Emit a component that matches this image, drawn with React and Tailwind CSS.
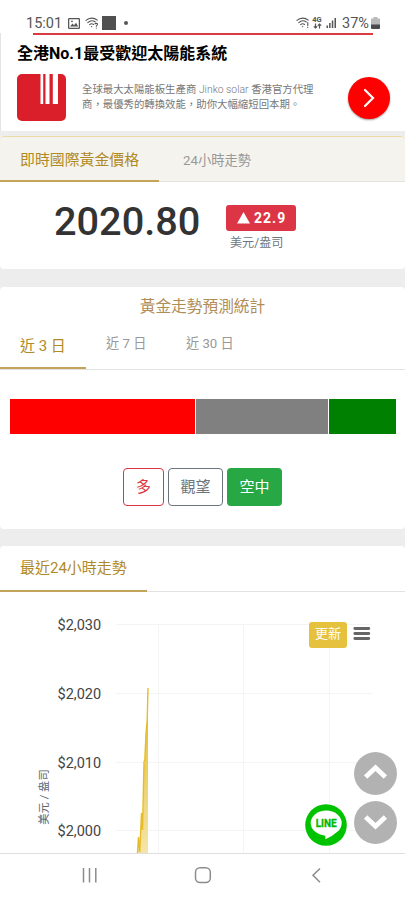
const segments = [
  { name: 'up', className: 'w-[185px] bg-[#ff0000]' },
  { name: 'wait', className: 'w-[132px] bg-[#808080]' },
  { name: 'down', className: 'w-[67px] bg-[#008000]' },
]

const yTicks = [
  { label: '$2,030', y: 33 },
  { label: '$2,020', y: 102 },
  { label: '$2,010', y: 171 },
  { label: '$2,000', y: 239 },
]

const xTicks = [158, 243, 329]

function WifiIcon({ mark }) {
  return (
    <svg width="14" height="12" viewBox="0 0 14 12" fill="none" stroke="#555" strokeWidth="1.1" strokeLinecap="round">
      <path d="M1 3.4C4.2.4 9 .4 12.2 3.2" />
      <path d="M2.8 5.6C5.2 3.4 8.2 3.4 10.3 5" />
      <path d="M4.6 7.7C6 6.5 7.4 6.6 8.5 7.5" />
      <circle cx="6.6" cy="9.6" r="0.7" fill="#555" stroke="none" />
      {mark === 'bar' ? (
        <path d="M11.8 5.5V8.6M11.8 10.4V10.5" />
      ) : (
        <path d="M9.9 6.9C10.6 6 12.7 6.2 12.5 7.5C12.3 8.4 11.3 8.4 11.3 9.3M11.3 11V11.1" />
      )}
    </svg>
  )
}

function StatusBar() {
  return (
    <div className="flex h-[33px] items-start justify-between bg-white pl-[26px] pr-[25px] pt-[14px] text-[#555]">
      <div className="flex h-[20px] items-center">
        <span className="w-[42px] text-[14.5px] leading-5">15:01</span>
        <svg width="12" height="11" viewBox="0 0 12 11" className="-mt-0.5">
          <rect x="0.6" y="0.6" width="10.8" height="9.8" rx="1" fill="none" stroke="#555" strokeWidth="1.3" />
          <path d="M2 8.6L4.5 5.6L6 7.2L8 4.8L10.2 8.6Z" fill="#555" />
          <circle cx="4" cy="3.3" r="0.9" fill="#555" />
        </svg>
        <span className="-mt-0.5 ml-[5px]"><WifiIcon /></span>
        <span className="-mt-0.5 ml-[3px] h-[14px] w-[14px] bg-[#505050]" />
        <span className="-mt-0.5 ml-[8px] h-[4px] w-[4px] rounded-full bg-[#555]" />
      </div>
      <div className="flex h-[20px] items-center">
        <span className="-mt-0.5"><WifiIcon mark="bar" /></span>
        <div className="-mt-0.5 ml-[2px] flex w-[10px] flex-col items-center">
          <span className="text-[7.5px] font-bold leading-[6px]">4G</span>
          <svg width="9" height="6" viewBox="0 0 9 6" fill="none" stroke="#555" strokeWidth="1.2">
            <path d="M2.5 0.5V5M0.8 3.3L2.5 5L4.2 3.3M6.5 5.5V1M4.8 2.7L6.5 1L8.2 2.7" />
          </svg>
        </div>
        <svg width="11" height="12" viewBox="0 0 11 12" fill="#555" className="-mt-0.5 ml-[4px]">
          <rect x="0.5" y="8.5" width="1.5" height="2.5" />
          <rect x="3.1" y="6" width="1.5" height="5" />
          <rect x="5.8" y="3.5" width="1.5" height="7.5" />
          <rect x="8.5" y="1" width="1.5" height="10" />
        </svg>
        <span className="ml-[5px] w-[29px] whitespace-nowrap text-[14.5px] leading-5">37%</span>
        <svg width="9" height="12" viewBox="0 0 9 12" className="-mt-0.5">
          <path d="M2.5 0H6.5V1.5H9V8H0V1.5H2.5Z" fill="#b9b9b9" />
          <path d="M0 7.5H9V11A1 1 0 0 1 8 12H1A1 1 0 0 1 0 11Z" fill="#4a4a4a" />
        </svg>
      </div>
    </div>
  )
}

function AdBanner() {
  return (
    <div className="h-[98px] border-l border-[#e4e4e4] bg-white">
      <div className="ml-[32px] h-[2px] w-[340px] bg-[#d93c3f]" />
      <p className="ml-[16px] mt-[7px] whitespace-nowrap text-[16px] font-bold leading-[24px] text-black">全港No.1最受歡迎太陽能系統</p>
      <div className="ml-[16px] mt-[8px] flex items-start">
        <svg width="49" height="47" viewBox="0 0 49 47">
          <rect width="49" height="47" rx="5" fill="#da1f2a" />
          <path d="M23.5 0H26.2V30H23.5ZM28.5 0H32.5V30H28.5ZM35.8 0H41V30H35.8Z" fill="#fff" />
        </svg>
        <p className="ml-[16px] mt-[8px] w-[266px] whitespace-nowrap text-[10.4px] leading-[15px] text-[#777]">
          全球最大太陽能板生產商 <span className="font-light">Jinko solar</span> 香港官方代理
          <br />
          商，最優秀的轉換效能，助你大幅縮短回本期。
        </p>
        <div className="mt-[3px] flex h-[42px] w-[42px] items-center justify-center rounded-full bg-[#ff0000] shadow-[0_1px_2px_rgba(0,0,0,0.4)]">
          <svg width="12" height="20" viewBox="0 0 12 20" fill="none" stroke="#fff" strokeWidth="2.2" strokeLinecap="round">
            <path d="M2 2L10 10L2 18" />
          </svg>
        </div>
      </div>
    </div>
  )
}

function PriceCard() {
  return (
    <section className="mt-[5px] h-[133px] overflow-hidden rounded-[4px] bg-white">
      <div className="flex h-[46px] rounded-t-[4px] border-b border-t border-b-[#e6e3da] border-t-[#eadba8] bg-[#f4f3ee]">
        <div className="flex h-[45px] w-[159px] items-center border-b-2 border-[#c4a35a] pl-[20px] text-[14.9px] text-[#b08a24]">
          <span className="mt-[3px]">即時國際黃金價格</span>
        </div>
        <div className="flex h-[46px] items-center pl-[24px] pt-[2px] text-[13.3px] text-[#999]">24小時走勢</div>
      </div>
      <div className="flex pl-[54px] pt-[20px]">
        <span className="w-[172px] text-[39.7px] font-medium leading-[40px] text-[#333]">2020.80</span>
        <div className="mt-[3px] flex flex-col">
          <div className="flex h-[26px] w-[70px] items-center rounded-[3px] bg-[#dc3545] pl-[11px] text-white">
            <svg width="13" height="12" viewBox="0 0 13 12" fill="#fff">
              <path d="M6.5 0L13 11.5H0Z" />
            </svg>
            <span className="ml-[4px] text-[14px] font-bold tracking-[1px]">22.9</span>
          </div>
          <span className="mt-[3px] pl-[4px] text-[12.1px] leading-[19px] text-[#6c757d]">美元/盎司</span>
        </div>
      </div>
    </section>
  )
}

function ForecastCard() {
  return (
    <section className="mt-[18px] h-[242px] rounded-[4px] bg-white">
      <h2 className="pt-[8px] text-center text-[15.7px] leading-[24px] text-[#b08d57]">黃金走勢預測統計</h2>
      <div className="flex h-[51px] items-start border-b border-[#e2e2e2] text-[13.2px] text-[#999]">
        <div className="h-[50px] w-[86px] border-b-2 border-[#c4a35a] pl-[20px] pt-[15px] text-[15px] leading-[24px] text-[#b08a24]">近 3 日</div>
        <div className="w-[80px] pl-[20px] pt-[13px] leading-[24px]">近 7 日</div>
        <div className="pl-[20px] pt-[13px] leading-[24px]">近 30 日</div>
      </div>
      <div className="mt-[29px] flex h-[35px] gap-px pl-[10px] pr-[9px]">
        {segments.map((s) => (
          <div key={s.name} className={s.className} />
        ))}
      </div>
      <div className="mt-[34px] flex justify-center gap-[4px] text-[15px]">
        <button className="h-[38px] w-[41px] rounded-[4px] border border-[#dc3545] text-[#dc3545]">多</button>
        <button className="h-[38px] w-[55px] rounded-[4px] border border-[#6c757d] text-[#6c757d]">觀望</button>
        <button className="h-[38px] w-[55px] rounded-[4px] bg-[#28a745] text-white">空中</button>
      </div>
    </section>
  )
}

function PriceChart() {
  return (
    <svg width="405" height="261" viewBox="0 0 405 261">
      <defs>
        <linearGradient id="area" x1="0" y1="0" x2="0" y2="1">
          <stop offset="0" stopColor="#e5b91f" />
          <stop offset="1" stopColor="#f4e4ab" />
        </linearGradient>
      </defs>
      {xTicks.map((x) => (
        <path key={x} d={`M${x + 0.5} 33V261`} stroke="#f4f4f4" />
      ))}
      {yTicks.map((t) => (
        <g key={t.label}>
          <path d={`M116 ${t.y - 0.5}H372`} stroke="#f4f4f4" />
          <text x="57.5" y={t.y + 4.5} fontSize="14.5" fill="#444">{t.label}</text>
        </g>
      ))}
      <text transform="translate(47.5 205) rotate(-90)" textAnchor="middle" fontSize="11.3" fill="#666">美元 / 盎司</text>
      <path
        d="M137.3 261L138.4 245L140 260L141.5 221L142.7 238L144 170L144.8 173L146 142L147.2 128L148 96V261Z"
        fill="url(#area)"
      />
      <path
        d="M137.5 261L138.5 245L139.8 260L141.5 221L142.5 238L144 170L144.8 168L146 142L147.2 128L148 96"
        fill="none"
        stroke="#e6bd28"
        strokeWidth="1.4"
      />
    </svg>
  )
}

function ChartCard() {
  return (
    <section className="relative mt-[17px] h-[307px] overflow-hidden rounded-t-[4px] bg-white">
      <div className="h-[46px] border-b border-[#e2e2e2]">
        <div className="flex h-[45.5px] w-[147px] items-center border-b-2 border-[#c4a35a] pl-[20px] text-[15px] text-[#b08a24]">最近24小時走勢</div>
      </div>
      <PriceChart />
      <button className="absolute left-[309px] top-[76px] h-[26px] w-[38px] rounded-[3px] bg-[#e6c13d] pb-[2px] text-[13px] text-white">更新</button>
      <svg className="absolute left-[353px] top-[81px]" width="18" height="13" viewBox="0 0 18 13" stroke="#666" strokeWidth="2.8" strokeLinecap="round">
        <path d="M1.8 1.5H15.8M1.8 6.5H15.8M1.8 11.5H15.8" />
      </svg>
      <div className="absolute left-[354px] top-[206px] flex flex-col gap-[6px]">
        <div className="flex h-[43px] w-[43px] items-center justify-center rounded-full bg-[#b2b2b2]">
          <svg width="25" height="18" viewBox="0 0 25 18" fill="none" stroke="#fff" strokeWidth="4.8" className="-mt-[3px]">
            <path d="M2.6 14L12.5 4.7L22.4 14" />
          </svg>
        </div>
        <div className="flex h-[43px] w-[43px] items-center justify-center rounded-full bg-[#b2b2b2]">
          <svg width="25" height="18" viewBox="0 0 25 18" fill="none" stroke="#fff" strokeWidth="4.8">
            <path d="M2.6 3L12.5 12.3L22.4 3" />
          </svg>
        </div>
      </div>
      <svg className="absolute left-[305px] top-[258px]" width="42" height="42" viewBox="0 0 42 42">
        <circle cx="21" cy="21" r="20.8" fill="#00c300" />
        <ellipse cx="21.2" cy="19" rx="15.5" ry="12.5" fill="#fff" />
        <path d="M17 30.5C20.5 31 20.8 32.5 20.2 35.2C25 33.5 31 29.5 34.5 25L24 26Z" fill="#fff" />
        <text x="21.2" y="23" textAnchor="middle" fontSize="10.5" fontWeight="700" fill="#00b900" stroke="#00b900" strokeWidth="0.3" textLength="21" lengthAdjust="spacingAndGlyphs">LINE</text>
      </svg>
    </section>
  )
}

function NavBar() {
  return (
    <nav className="h-[47px] border-t border-[#dedede] bg-white">
      <svg width="405" height="46" viewBox="0 0 405 46" fill="none" stroke="#8c8c8c" strokeWidth="1.5">
        <path d="M83.5 14V28.5M89.5 14V28.5M95.8 14V28.5" />
        <rect x="195.5" y="13.8" width="14.8" height="14.8" rx="4.5" />
        <path d="M320 14.5L313 21.3L320 28.2" />
      </svg>
    </nav>
  )
}

export default function App() {
  return (
    <div className="h-[900px] w-[405px] overflow-hidden bg-[#ededed] font-['Roboto','Noto_Sans_CJK_TC',sans-serif]">
      <StatusBar />
      <AdBanner />
      <PriceCard />
      <ForecastCard />
      <ChartCard />
      <NavBar />
    </div>
  )
}
